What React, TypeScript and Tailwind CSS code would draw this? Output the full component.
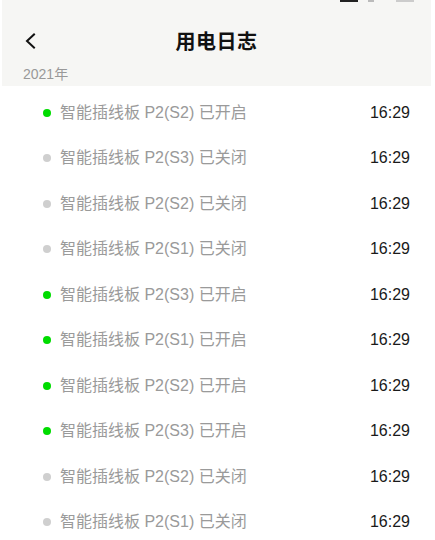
const logs = [
  { name: '智能插线板 P2(S2) 已开启', on: true },
  { name: '智能插线板 P2(S3) 已关闭', on: false },
  { name: '智能插线板 P2(S2) 已关闭', on: false },
  { name: '智能插线板 P2(S1) 已关闭', on: false },
  { name: '智能插线板 P2(S3) 已开启', on: true },
  { name: '智能插线板 P2(S1) 已开启', on: true },
  { name: '智能插线板 P2(S2) 已开启', on: true },
  { name: '智能插线板 P2(S3) 已开启', on: true },
  { name: '智能插线板 P2(S2) 已关闭', on: false },
  { name: '智能插线板 P2(S1) 已关闭', on: false },
];

export default function App() {
  return (
    <div className="w-[435px] h-[540px] overflow-hidden bg-white font-['Liberation_Sans','Noto_Sans_CJK_SC',sans-serif]">
      {/* Header — grey band with status hints, nav bar and year label */}
      <div className="ml-[2px] w-[429px] h-[86px] bg-[#f6f6f4] flex flex-col">
        <div className="h-[19px] flex items-start pl-[338px] gap-[10px]">
          <div className="w-[18px] h-[2px] bg-[#222]" />
          <div className="w-[6px] h-[2px] bg-[#bbb]" />
          <div className="ml-[12px] w-[18px] h-[2px] bg-[#ccc]" />
        </div>

        <div className="relative h-[44px] flex items-center justify-center">
          <svg
            className="absolute left-[21px] top-[14px]"
            width="14"
            height="16"
            viewBox="0 0 14 16"
            fill="none"
          >
            <path d="M11 1.5L4 8l7 6.5" stroke="#111" strokeWidth="2" strokeLinecap="square" />
          </svg>
          <span className="text-[20px] font-bold text-[#111] tracking-[0.5px] font-['Noto_Sans_CJK_SC',sans-serif]">
            用电日志
          </span>
        </div>

        <div className="h-[23px] pl-[21px] flex items-center text-[14px] text-[#999]">
          2021年
        </div>
      </div>

      {/* Log rows */}
      <div className="pt-[4px]">
        {logs.map((log, i) => (
          <div key={i} className="h-[45.5px] flex items-center pl-[43px] pr-[25px]">
            <div className={log.on ? 'w-[8px] h-[8px] rounded-full bg-[#00dc00]' : 'w-[8px] h-[8px] rounded-full bg-[#cfcfcf]'} />
            <span className="ml-[9px] text-[16px] text-[#9a9a9a]">{log.name}</span>
            <span className="ml-auto text-[16px] text-[#1a1a1a]">16:29</span>
          </div>
        ))}
      </div>
    </div>
  );
}
